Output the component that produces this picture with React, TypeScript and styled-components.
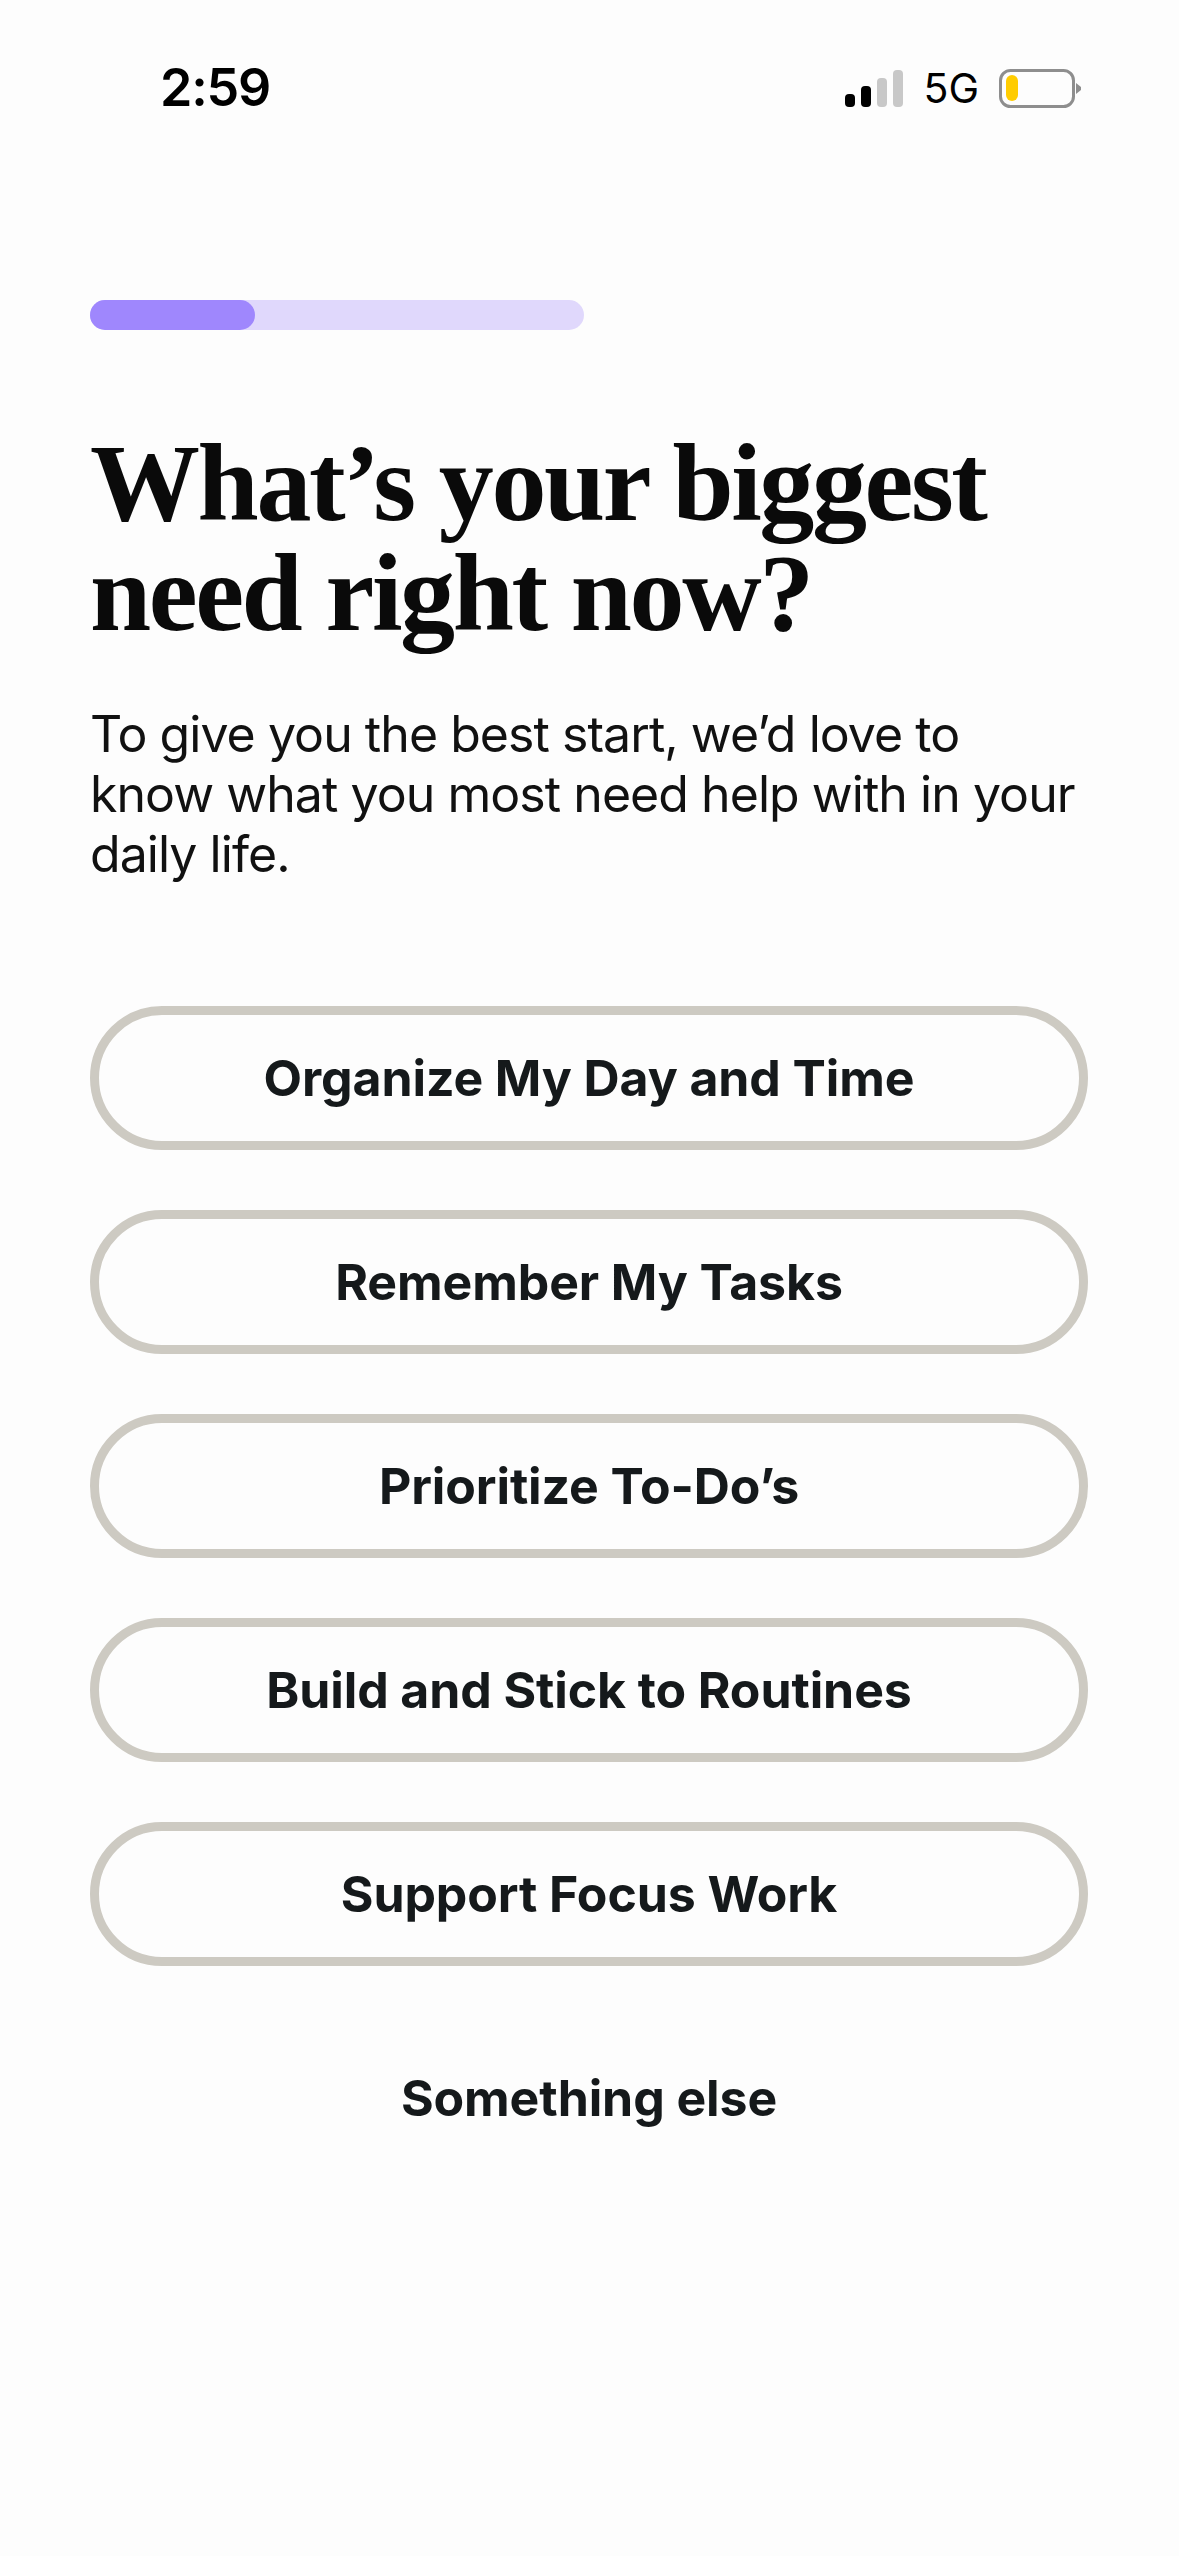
import styled, { createGlobalStyle } from 'styled-components';

const options = [
  'Organize My Day and Time',
  'Remember My Tasks',
  'Prioritize To-Do’s',
  'Build and Stick to Routines',
  'Support Focus Work',
];

const signalBars = [
  { x: 0, h: 13, on: true },
  { x: 16, h: 21, on: true },
  { x: 32, h: 29, on: false },
  { x: 48, h: 37, on: false },
];

const GlobalStyle = createGlobalStyle`
  html, body {
    margin: 0;
    padding: 0;
    background: #fdfdfd;
  }
  body {
    font-family: Inter, "Liberation Sans", sans-serif;
  }
`;

const SignalIcon = () => (
  <svg width="58" height="37" viewBox="0 0 58 37">
    {signalBars.map(bar => (
      <rect
        key={bar.x}
        x={bar.x}
        y={37 - bar.h}
        width="10"
        height={bar.h}
        rx="4"
        fill={bar.on ? '#000' : '#c8c8c8'}
      />
    ))}
  </svg>
);

const BatteryIcon = () => (
  <svg width="82" height="39" viewBox="0 0 82 39">
    <rect x="1.5" y="1.5" width="73" height="36" rx="10" fill="none" stroke="#8e8e8e" strokeWidth="3" />
    <rect x="7" y="6" width="12" height="26" rx="6" fill="#ffcc00" />
    <path d="M77 14 L82 18 V21 L77 25 Z" fill="#8e8e8e" />
  </svg>
);

const App = () => (
  <Page>
    <GlobalStyle />
    <StatusBar>
      <Clock>2:59</Clock>
      <StatusRight>
        <SignalIcon />
        <Network>5G</Network>
        <BatteryIcon />
      </StatusRight>
    </StatusBar>
    <Content>
      <Progress>
        <ProgressFill />
      </Progress>
      <Title>
        What’s your biggest
        <br />
        need right now?
      </Title>
      <Intro>
        To give you the best start, we’d love to
        <br />
        know what you most need help with in your
        <br />
        daily life.
      </Intro>
      <OptionList>
        {options.map(label => (
          <OptionBtn key={label}>{label}</OptionBtn>
        ))}
      </OptionList>
      <SkipBtn>Something else</SkipBtn>
    </Content>
  </Page>
);

export default App;

const Page = styled.div`
  width: 1179px;
  height: 2556px;
  background: #fdfdfd;
  color: #000;
  overflow: hidden;
`;

const StatusBar = styled.div`
  display: flex;
  align-items: center;
  justify-content: space-between;
  height: 60px;
  padding: 58px 98px 0 160px;
`;

const Clock = styled.div`
  font-size: 52px;
  font-weight: 600;
  line-height: 60px;
  letter-spacing: -1.2px;
`;

const StatusRight = styled.div`
  display: flex;
  align-items: center;
  gap: 20px;
`;

const Network = styled.div`
  font-size: 41px;
  font-weight: 400;
  line-height: 40px;
`;

const Content = styled.div`
  display: flex;
  flex-direction: column;
  padding: 182px 91px 0 90px;
`;

const Progress = styled.div`
  width: 494px;
  height: 30px;
  border-radius: 15px;
  background: #e0d8fc;
`;

const ProgressFill = styled.div`
  width: 165px;
  height: 30px;
  border-radius: 15px;
  background: #9f87fd;
`;

const Title = styled.h1`
  margin: 98px 0 0;
  font-family: "Liberation Serif", serif;
  font-size: 110px;
  font-weight: 700;
  line-height: 110px;
  letter-spacing: -2.4px;
  white-space: nowrap;
  color: #0a0a0a;
`;

const Intro = styled.p`
  margin: 56px 0 0;
  font-size: 50px;
  font-weight: 400;
  line-height: 60px;
  letter-spacing: -0.95px;
  white-space: nowrap;
  color: #111;
`;

const OptionList = styled.div`
  display: flex;
  flex-direction: column;
  gap: 60px;
  margin-top: 122px;
`;

const OptionBtn = styled.button`
  box-sizing: border-box;
  width: 998px;
  height: 144px;
  border: 9px solid #cdcac2;
  border-radius: 72px;
  background: transparent;
  font-family: inherit;
  font-size: 50px;
  font-weight: 700;
  letter-spacing: -0.1px;
  color: #15191b;
`;

const SkipBtn = styled.button`
  width: 998px;
  height: 144px;
  margin-top: 60px;
  border: none;
  background: transparent;
  font-family: inherit;
  font-size: 50px;
  font-weight: 700;
  letter-spacing: -0.1px;
  color: #15191b;
`;
